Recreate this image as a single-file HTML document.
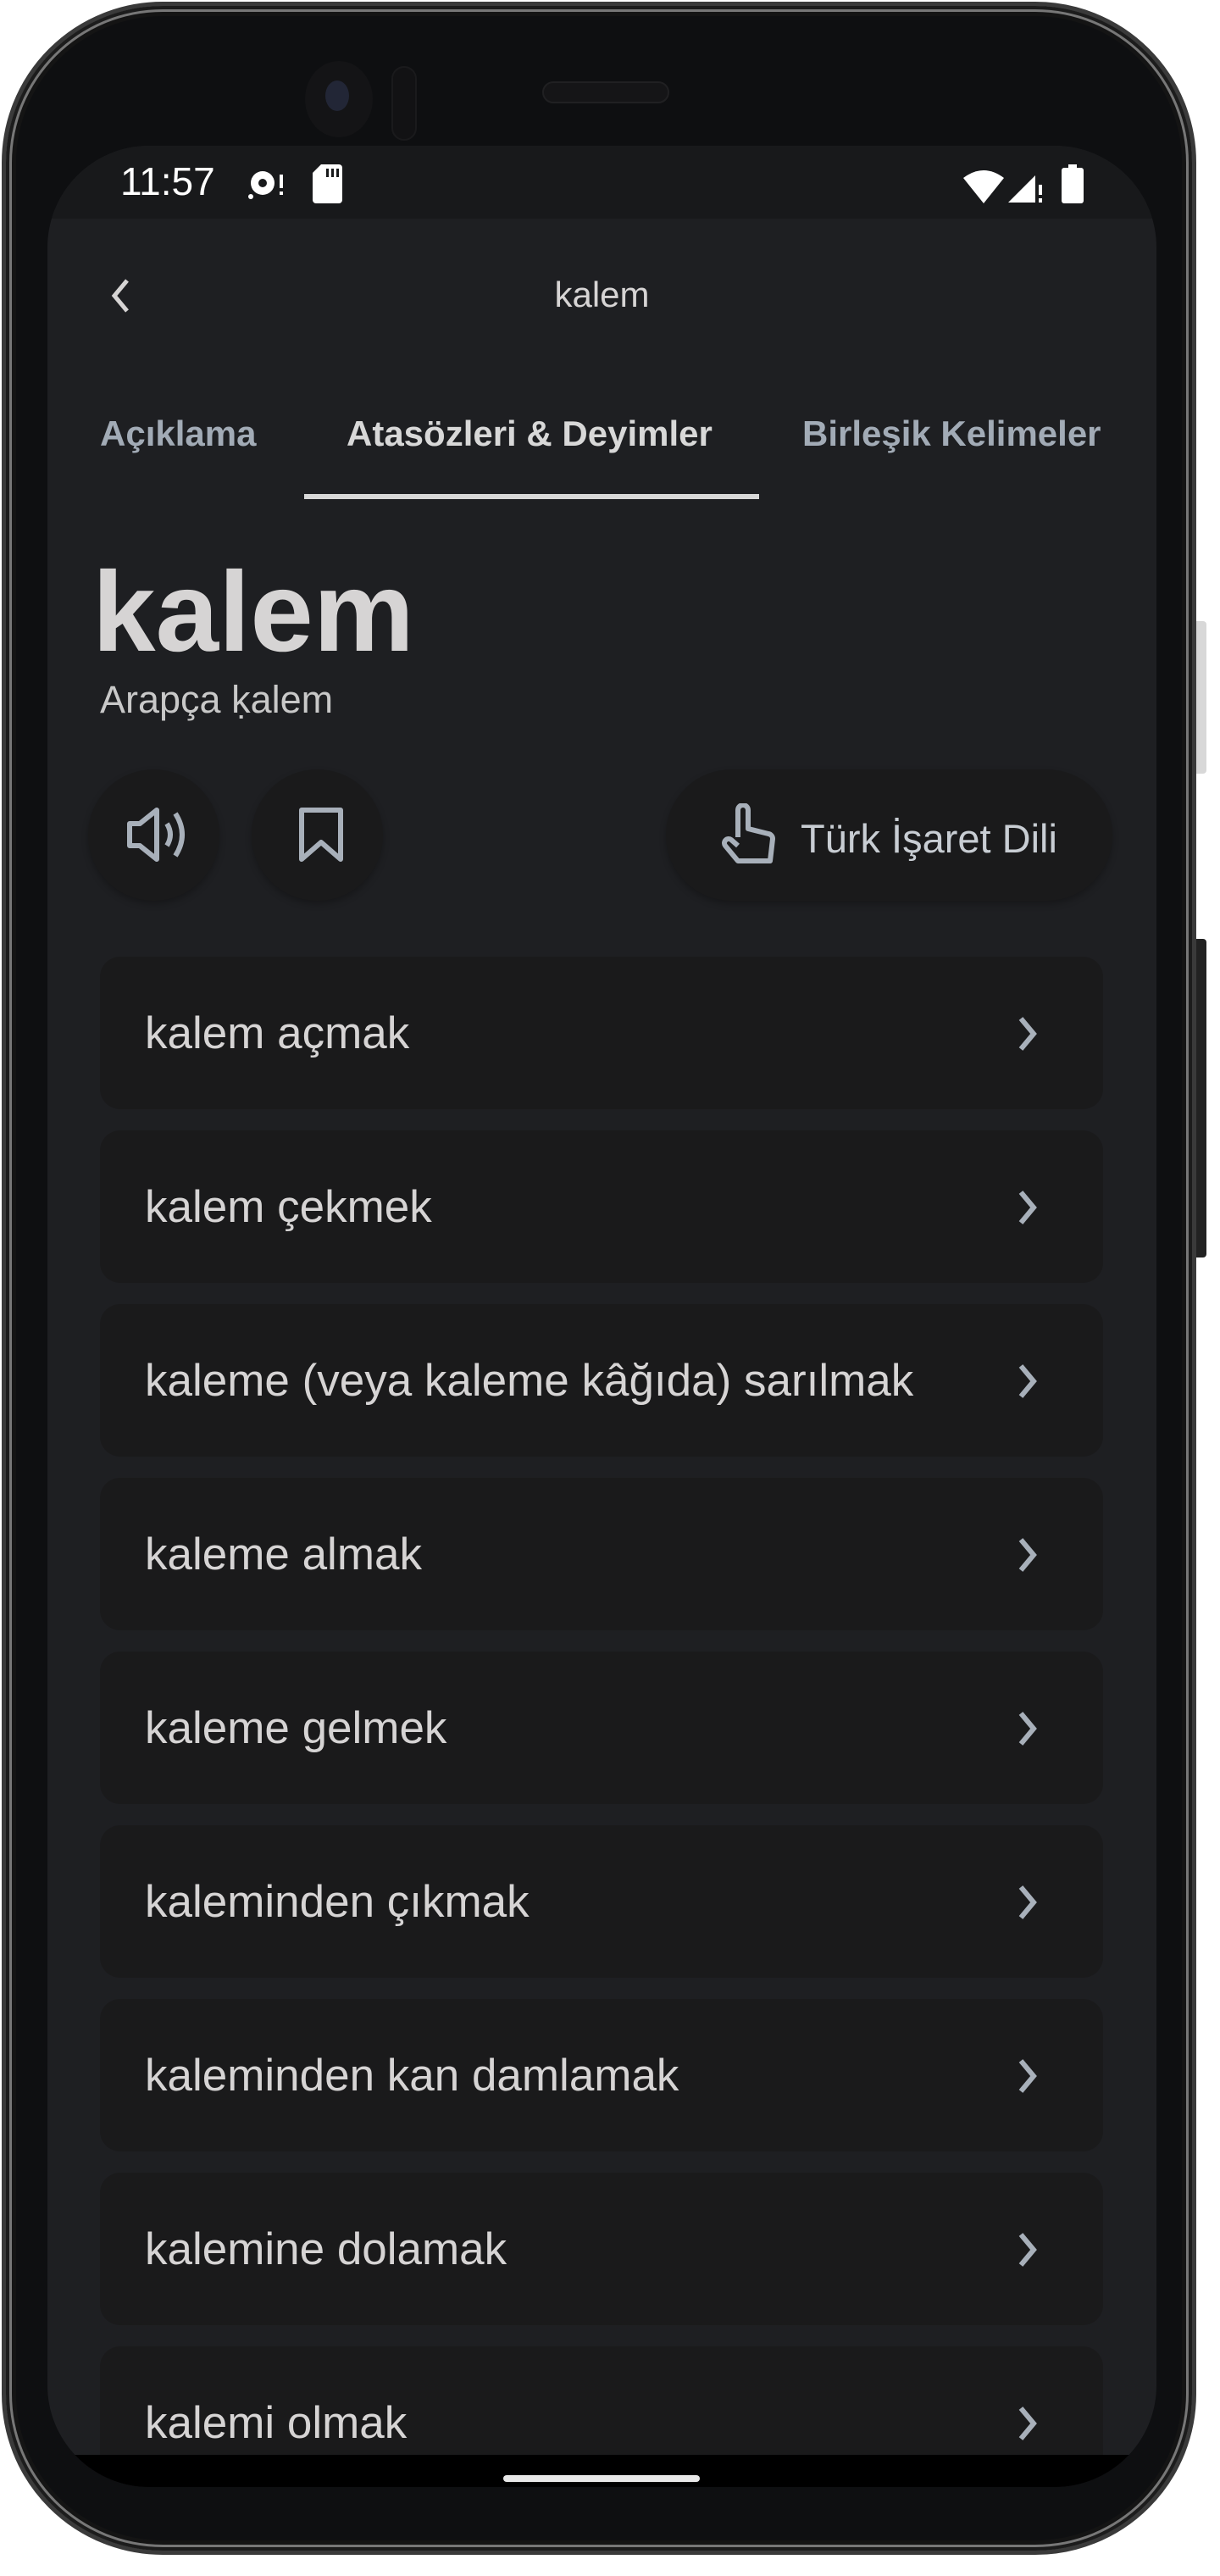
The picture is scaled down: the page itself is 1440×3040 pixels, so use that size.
<!DOCTYPE html>
<html><head><meta charset="utf-8"><style>
*{margin:0;padding:0;box-sizing:border-box}
html,body{width:1440px;height:3040px;background:#fff;overflow:hidden;font-family:"Liberation Sans",sans-serif}
.abs{position:absolute}
#phone{left:2px;top:2px;width:1410px;height:3013px;border-radius:190px;background:#0e0f11;border:5px solid #3a3a3a;box-shadow:inset 0 0 0 4px #1c1c1c,inset 0 0 0 7px #777,inset 0 0 0 12px #141414}
#screen{left:56px;top:172px;width:1309px;height:2763px;border-radius:120px;background:#1e1f22;overflow:hidden}
#status{left:0;top:0;width:1309px;height:86px;background:#18191b}
.card{position:absolute;left:62px;width:1184px;height:180px;border-radius:24px;background:#1a1a1b;color:#d6d4d4;font-size:53px;display:flex;align-items:center;padding-left:53px}
.card svg{position:absolute;right:76px;top:70px}
.tab{position:absolute;top:316px;font-size:42px;font-weight:bold;color:#a2abb6}
.circ{position:absolute;border-radius:50%;background:#1a1a1b;box-shadow:0 4px 8px rgba(0,0,0,.25)}
</style></head><body>
<div id="phone" class="abs"></div>
<div class="abs" style="left:1412px;top:733px;width:12px;height:180px;background:#d8d8d8;border-radius:0 4px 4px 0"></div>
<div class="abs" style="left:1412px;top:1108px;width:12px;height:376px;background:#222;border-radius:0 4px 4px 0"></div>
<div class="abs" style="left:360px;top:72px;width:80px;height:90px;border-radius:50%;background:#141416"></div>
<div class="abs" style="left:384px;top:95px;width:28px;height:36px;border-radius:50%;background:#222636"></div>
<div class="abs" style="left:462px;top:78px;width:30px;height:88px;border-radius:15px;background:#121214;border:2px solid #1a1a1c"></div>
<div class="abs" style="left:640px;top:96px;width:150px;height:26px;border-radius:13px;background:#151517;border:2px solid #202022"></div>

<div id="screen" class="abs">
  <div id="status" class="abs"></div>
  <div class="abs" style="left:86px;top:15px;font-size:46px;color:#fff">11:57</div>
  <svg class="abs" style="left:236px;top:26px" width="46" height="40" viewBox="0 0 46 40"><circle cx="18" cy="18" r="14" fill="#fff"/><circle cx="18" cy="18" r="5" fill="#18191b"/><rect x="38" y="8" width="4" height="16" fill="#fff"/><rect x="38" y="28" width="4" height="4" fill="#fff"/><circle cx="4" cy="34" r="3" fill="#fff"/></svg>
  <svg class="abs" style="left:313px;top:22px" width="36" height="46" viewBox="0 0 36 46"><path d="M10 0H31a4 4 0 0 1 4 4V42a4 4 0 0 1-4 4H4a4 4 0 0 1-4-4V10z" fill="#fff"/><rect x="16" y="5" width="3" height="10" fill="#18191b"/><rect x="22" y="5" width="3" height="10" fill="#18191b"/><rect x="28" y="5" width="3" height="10" fill="#18191b"/></svg>
  <svg class="abs" style="left:1081px;top:26px" width="50" height="42" viewBox="0 0 50 42"><path d="M0 12Q24 -6 48 12L24 42Z" fill="#fff"/></svg>
  <svg class="abs" style="left:1134px;top:24px" width="42" height="44" viewBox="0 0 42 44"><path d="M0 43L32 11V43Z" fill="#fff"/><rect x="36" y="22" width="4" height="12" fill="#fff"/><rect x="36" y="38" width="4" height="5" fill="#fff"/></svg>
  <svg class="abs" style="left:1197px;top:22px" width="28" height="46" viewBox="0 0 28 46"><rect x="8" y="0" width="10" height="6" fill="#fff"/><rect x="0" y="4" width="26" height="42" rx="3" fill="#fff"/></svg>

  <svg class="abs" style="left:72px;top:155px" width="30" height="44" viewBox="0 0 30 44"><path d="M22 4L7 22L22 40" stroke="#d6d4d4" stroke-width="5" fill="none"/></svg>
  <div class="abs" style="left:0;width:1309px;top:152px;text-align:center;font-size:42px;color:#d6d4d4">kalem</div>

  <div class="tab" style="left:62px">Açıklama</div>
  <div class="tab" style="left:353px;color:#d8d8d8">Atasözleri &amp; Deyimler</div>
  <div class="tab" style="left:891px">Birleşik Kelimeler</div>
  <div class="abs" style="left:303px;top:411px;width:537px;height:6px;background:#d8d8d8"></div>

  <div class="abs" style="left:53px;top:484px;font-size:134px;font-weight:bold;color:#d6d4d4;line-height:1">kalem</div>
  <div class="abs" style="left:62px;top:628px;font-size:45px;color:#c8c8c8">Arapça ḳalem</div>

  <div class="circ" style="left:48px;top:736px;width:155px;height:155px"></div>
  <svg class="abs" style="left:93px;top:780px" width="74" height="66" viewBox="0 0 74 66"><path d="M4 20H16L36 4V62L16 46H4Z" stroke="#a8b0ba" stroke-width="6" fill="none" stroke-linejoin="round"/><path d="M48 20Q56 33 48 46" stroke="#a8b0ba" stroke-width="6" fill="none"/><path d="M58 8Q74 33 58 58" stroke="#a8b0ba" stroke-width="6" fill="none"/></svg>
  <div class="circ" style="left:241px;top:736px;width:155px;height:155px"></div>
  <svg class="abs" style="left:296px;top:780px" width="54" height="66" viewBox="0 0 54 66"><path d="M4 4H50V62L27 42L4 62Z" stroke="#a8b0ba" stroke-width="6" fill="none" stroke-linejoin="round"/></svg>
  <div class="abs" style="left:730px;top:736px;width:527px;height:155px;border-radius:78px;background:#1a1a1b;box-shadow:0 4px 8px rgba(0,0,0,.25)"></div>
  <svg class="abs" style="left:795px;top:776px" width="66" height="72" viewBox="0 0 66 72"><path d="M20 40V8a6 6 0 0 1 12 0V30l24 6a6 6 0 0 1 5 6L58 68H20L5 50a5 5 0 0 1 7-7L20 50" stroke="#a8b0ba" stroke-width="6" fill="none" stroke-linejoin="round"/></svg>
  <div class="abs" style="left:889px;top:790px;font-size:47px;color:#c8cdd3">Türk İşaret Dili</div>

  <div class="card" style="top:957px">kalem açmak<svg width="26" height="42" viewBox="0 0 26 42"><path d="M5 3L20 21L5 39" stroke="#a8b0ba" stroke-width="6" fill="none"/></svg></div>
  <div class="card" style="top:1162px">kalem çekmek<svg width="26" height="42" viewBox="0 0 26 42"><path d="M5 3L20 21L5 39" stroke="#a8b0ba" stroke-width="6" fill="none"/></svg></div>
  <div class="card" style="top:1367px">kaleme (veya kaleme kâğıda) sarılmak<svg width="26" height="42" viewBox="0 0 26 42"><path d="M5 3L20 21L5 39" stroke="#a8b0ba" stroke-width="6" fill="none"/></svg></div>
  <div class="card" style="top:1572px">kaleme almak<svg width="26" height="42" viewBox="0 0 26 42"><path d="M5 3L20 21L5 39" stroke="#a8b0ba" stroke-width="6" fill="none"/></svg></div>
  <div class="card" style="top:1777px">kaleme gelmek<svg width="26" height="42" viewBox="0 0 26 42"><path d="M5 3L20 21L5 39" stroke="#a8b0ba" stroke-width="6" fill="none"/></svg></div>
  <div class="card" style="top:1982px">kaleminden çıkmak<svg width="26" height="42" viewBox="0 0 26 42"><path d="M5 3L20 21L5 39" stroke="#a8b0ba" stroke-width="6" fill="none"/></svg></div>
  <div class="card" style="top:2187px">kaleminden kan damlamak<svg width="26" height="42" viewBox="0 0 26 42"><path d="M5 3L20 21L5 39" stroke="#a8b0ba" stroke-width="6" fill="none"/></svg></div>
  <div class="card" style="top:2392px">kalemine dolamak<svg width="26" height="42" viewBox="0 0 26 42"><path d="M5 3L20 21L5 39" stroke="#a8b0ba" stroke-width="6" fill="none"/></svg></div>
  <div class="card" style="top:2597px">kalemi olmak<svg width="26" height="42" viewBox="0 0 26 42"><path d="M5 3L20 21L5 39" stroke="#a8b0ba" stroke-width="6" fill="none"/></svg></div>

  <div class="abs" style="left:0;top:2725px;width:1309px;height:40px;background:#000"></div>
  <div class="abs" style="left:538px;top:2749px;width:232px;height:8px;border-radius:4px;background:#e8e8e8"></div>
</div>
</body></html>
